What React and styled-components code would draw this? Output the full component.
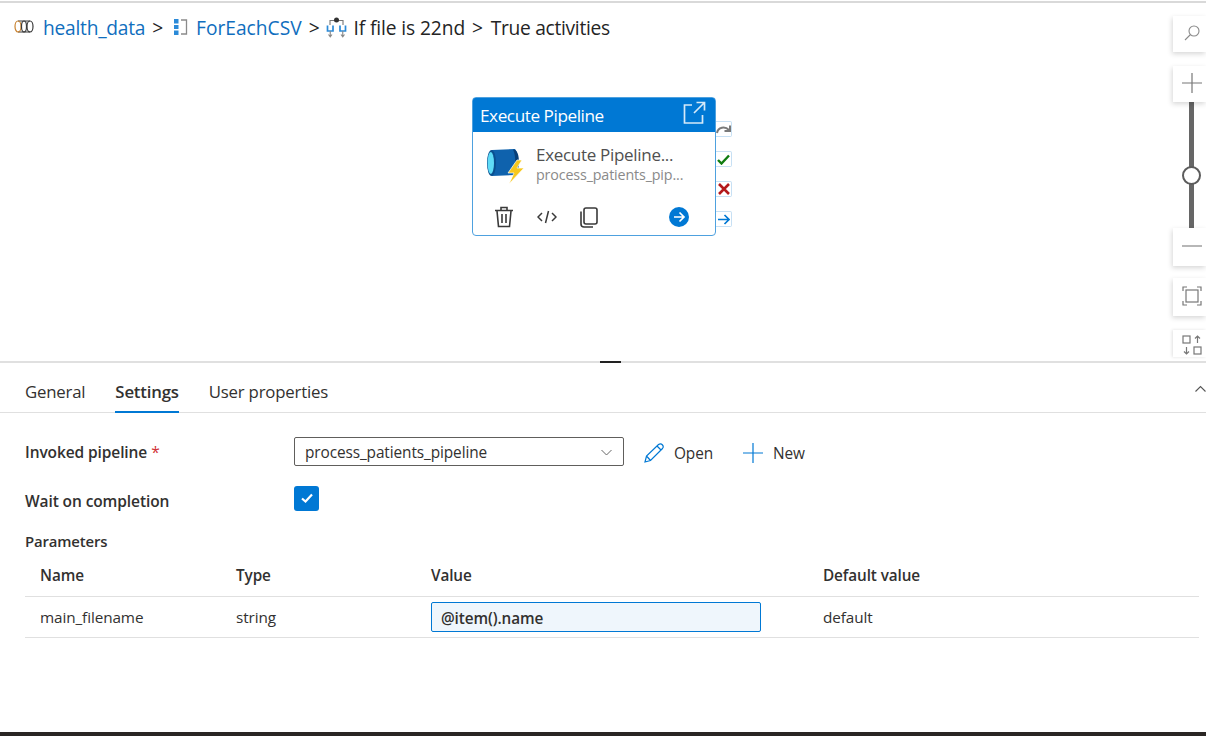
import React from "react";
import styled, { createGlobalStyle } from "styled-components";

const Global = createGlobalStyle`
  html, body { margin: 0; padding: 0; background: #fff; }
  body { font-family: "Open Sans", "Noto Sans", "Liberation Sans", sans-serif; color: #242424; }
  * { box-sizing: border-box; }
`;

const Page = styled.div`
  width: 1206px; height: 736px; overflow: hidden; display: flex; flex-direction: column; background: #fff;
`;
const TopRule = styled.div`
  flex: none; border-top: 2px solid #d9d9d9; margin-top: 1px; height: 3px;
`;
const Canvas = styled.section`
  position: relative; height: 357px; flex: none; padding: 11px 0 0 14px;
`;
const Crumbs = styled.nav`
  display: flex; align-items: center; height: 24px; font-size: 19.2px; color: #242424; white-space: nowrap;
`;
const CrumbLink = styled.span`
  color: #106ebe; margin-left: ${p => p.$ml || 0}px; letter-spacing: ${p => p.$ls ?? -0.25}px;
`;
const CrumbText = styled.span`
  margin-left: ${p => p.$ml || 0}px; letter-spacing: ${p => p.$ls ?? -0.2}px;
`;
const CrumbIcon = styled.svg`
  flex: none; margin-left: ${p => p.$ml || 0}px; display: block;
`;

const Node = styled.div`
  position: absolute; left: 472px; top: 93px; width: 244px; height: 139px;
  border: 1.5px solid #4ea1df; border-radius: 4px; background: #fff; display: flex; flex-direction: column;
`;
const NodeHeader = styled.div`
  height: 34px; flex: none; background: #0078d4; color: #fff; display: flex; align-items: center; justify-content: space-between;
  padding: 0 9px 0 7px; font-size: 17.2px; letter-spacing: -0.45px; border-radius: 2px 2px 0 0;
`;
const NodeBody = styled.div`
  display: flex; align-items: flex-start; padding: 13px 0 0 13px; gap: 11px; height: 70px; flex: none;
`;
const ActivityIcon = styled.svg`
  display: block; flex: none; margin-top: 2px;
`;
const NodeTexts = styled.div`
  display: flex; flex-direction: column; white-space: nowrap;
`;
const NodeTitle = styled.div`
  font-size: 17px; line-height: 20px; color: #505050; letter-spacing: -0.3px;
`;
const NodeSub = styled.div`
  font-size: 14.3px; line-height: 19px; color: #8a8a8a; letter-spacing: -0.15px;
`;
const NodeActions = styled.div`
  display: flex; align-items: center; padding: 2px 26px 0 21px; height: 28px;
`;
const ActionIcon = styled.svg`
  display: block; flex: none; margin-left: ${p => p.$ml || 0}px;
`;
const Spacer = styled.div` flex: 1; `;
const Ports = styled.div`
  position: absolute; left: 716px; top: 117px; display: flex; flex-direction: column; gap: 14px;
`;
const Port = styled.div`
  width: 16px; height: 16px; border: 1px solid #c7e0f4; border-left: none; border-radius: 0 2px 2px 0; background: #fff;
  display: flex; align-items: center; justify-content: center;
`;

const ZoomBar = styled.div`
  position: absolute; left: 1173px; top: 12px; width: 33px; display: flex; flex-direction: column; align-items: stretch;
`;
const ZoomBtn = styled.div`
  height: ${p => p.$h}px; margin-top: ${p => p.$mt || 0}px; background: #fff; box-shadow: -1px 2px 5px rgba(0,0,0,0.16);
  display: flex; align-items: center; justify-content: center; padding: 0 0 2px 4px; overflow: hidden; position: relative; z-index: 1;
`;
const ZoomClip = styled(ZoomBtn)`
  box-shadow: -1px 0 3px rgba(0,0,0,0.12); align-items: flex-start; padding-top: 5px;
`;
const Track = styled.div`
  height: 126px; position: relative; display: flex; justify-content: center; padding-left: 4px;
  &::before { content: ""; width: 5px; height: 100%; background: #666; }
`;
const Thumb = styled.div`
  position: absolute; left: 9px; top: 64px; width: 19px; height: 19px; border-radius: 50%; background: #fff; border: 2px solid #5c5c5c;
`;

const Splitter = styled.div`
  height: 2px; flex: none; background: #e0e0e0; display: flex; justify-content: flex-start; padding-left: 600px;
`;
const Grip = styled.div` width: 21px; height: 2px; background: #222; `;

const Tabs = styled.div`
  height: 50px; flex: none; display: flex; align-items: stretch; gap: 30px; padding: 0 25px; border-bottom: 1px solid #e0e0e0; position: relative; font-size: 16.8px; letter-spacing: -0.2px;
`;
const Tab = styled.div`
  display: flex; align-items: center; padding-top: 8px; font-weight: ${p => p.$active ? 600 : 400};
  border-bottom: 2px solid ${p => p.$active ? "#0078d4" : "transparent"}; margin-bottom: -1px; color: #323130;
`;
const Collapse = styled.svg`
  position: absolute; right: 0; top: 22px;
`;

const Form = styled.div`
  display: flex; flex-direction: column; padding: 24px 7px 0 25px; flex: 1;
`;
const Row = styled.div`
  display: grid; grid-template-columns: 269px 1fr; align-items: center; height: ${p => p.$h}px; margin-bottom: ${p => p.$mb || 0}px;
`;
const Label = styled.div`
  font-size: 15.5px; font-weight: 600; color: #323130; letter-spacing: -0.1px;
  padding-top: ${p => p.$pt || 0}px;
`;
const Req = styled.span` color: #d13438; margin-left: 4px; font-weight: 400; `;
const Controls = styled.div` display: flex; align-items: center; `;
const Select = styled.div`
  width: 330px; height: 29px; border: 1px solid #605e5c; border-radius: 2px; display: flex; align-items: center; justify-content: space-between;
  padding: 1px 11px 0 10px; font-size: 15.4px; color: #323130; letter-spacing: -0.1px;
`;
const CmdBtn = styled.div`
  display: flex; align-items: center; gap: 10px; font-size: 15.4px; margin-left: ${p => p.$ml}px; color: #323130; letter-spacing: -0.1px; padding-top: 3px;
  svg { margin-top: -1px; }
`;
const Check = styled.div`
  width: 25px; height: 25px; border-radius: 3px; background: #0078d4; display: flex; align-items: center; justify-content: center;
`;
const SectionLabel = styled.div`
  font-size: 14.9px; font-weight: 600; color: #323130; height: 20px; line-height: 20px; letter-spacing: -0.15px;
`;
const Table = styled.div` display: flex; flex-direction: column; `;
const TRow = styled.div`
  display: grid; grid-template-columns: 196px 195px 392px 1fr; align-items: center; padding: ${p => p.$head ? "3px" : "0"} 0 0 15px; height: ${p => p.$h}px; border-bottom: 1px solid #e0e0e0;
  font-size: 15.3px; letter-spacing: -0.1px; color: #323130; font-weight: ${p => p.$head ? 600 : 400};
`;
const ValueInput = styled.div`
  width: 330px; height: 30px; background: #eff6fc; border: 1px solid #0078d4; border-radius: 2px; display: flex; align-items: center; padding: 1px 0 0 9px; font-weight: 600; color: #323130;
`;
const BottomBar = styled.div` height: 4px; flex: none; background: #2a2624; `;

const PipelineCrumb = () => (
  <CrumbIcon width="21" height="16" viewBox="0 0 21 16" fill="none" stroke="#3a3a3a" strokeWidth="1.200">
    <path d="M4 2H16M4 13H16" />
    <ellipse cx="4" cy="7.500" rx="3" ry="5.500" stroke="#c9822e" />
    <ellipse cx="10" cy="7.500" rx="2.500" ry="5.500" />
    <ellipse cx="16" cy="7.500" rx="3" ry="5.500" />
  </CrumbIcon>
);
const ForEachCrumb = () => (
  <CrumbIcon $ml={10} width="15" height="18" viewBox="0 0 15 18">
    <path d="M8 2H13.500V16H8" fill="none" stroke="#8a8a8a" strokeWidth="1.300" />
    <rect x="1" y="1" width="4.500" height="4.500" fill="#2b8ad8" />
    <rect x="1" y="7" width="4.500" height="4" fill="#2b8ad8" />
    <rect x="1" y="12.500" width="4.500" height="4.500" fill="#2b8ad8" />
  </CrumbIcon>
);
const IfCrumb = () => (
  <CrumbIcon $ml={7} width="21" height="21" viewBox="0 0 21 21" fill="none">
    <path d="M4 8V3.500H17V8" stroke="#777" strokeWidth="1.100" />
    <circle cx="10.500" cy="3" r="2.500" fill="#333" />
    <path d="M1.500 8.500V14H7V8.500M14 8.500V14H19.500V8.500" stroke="#2b8ad8" strokeWidth="1.700" />
    <path d="M4.250 14V20M16.750 14V20M2.500 17.500L4.250 19.800L6 17.500M15 17.500L16.750 19.800L18.500 17.500" stroke="#888" strokeWidth="1.100" />
  </CrumbIcon>
);
const PipelineActivity = () => (
  <ActivityIcon width="39" height="37" viewBox="0 0 39 37">
    <path d="M6 3 L29 2 C33 7 33 23 29 28 L6 29 Z" fill="#0f62ad" />
    <path d="M27 2.500 C31 2 33 8 33 15 C33 22 31 28 27 27.800 C30 22 30 8 27 2.500 Z" fill="#083f78" />
    <ellipse cx="5.500" cy="16" rx="4.500" ry="13" fill="#0a4f8f" />
    <ellipse cx="4.800" cy="16" rx="3.200" ry="11" fill="#5fdcf7" />
    <path d="M31 13 L22 26 H28 L23 37 L38 21 H31 L36 13 Z" fill="#f6c81e" stroke="#fff" strokeWidth="0.700" />
  </ActivityIcon>
);

export default function App() {
  return (
    <Page>
      <Global />
      <TopRule />
      <Canvas>
        <Crumbs>
          <PipelineCrumb />
          <CrumbLink $ml={8}>health_data</CrumbLink>
          <CrumbText $ml={7}>&gt;</CrumbText>
          <ForEachCrumb />
          <CrumbLink $ml={8} $ls={0}>ForEachCSV</CrumbLink>
          <CrumbText $ml={7}>&gt;</CrumbText>
          <IfCrumb />
          <CrumbText $ml={6} $ls={-0.1}>If file is 22nd</CrumbText>
          <CrumbText $ml={7}>&gt;</CrumbText>
          <CrumbText $ml={8} $ls={-0.3}>True activities</CrumbText>
        </Crumbs>

        <Node>
          <NodeHeader>
            Execute Pipeline
            <svg width="24" height="24" viewBox="0 0 24 24" fill="none" stroke="#d5e9f8" strokeWidth="1.700" style={{ marginTop: -4 }}>
              <path d="M10 4H2.500V22H20.500V14M12 12L22.500 1.500M14.500 1.500H22.500V9.500" />
            </svg>
          </NodeHeader>
          <NodeBody>
            <PipelineActivity />
            <NodeTexts>
              <NodeTitle>Execute Pipeline...</NodeTitle>
              <NodeSub>process_patients_pip...</NodeSub>
            </NodeTexts>
          </NodeBody>
          <NodeActions>
            <ActionIcon width="20" height="22" viewBox="0 0 20 22" fill="none" stroke="#3a3a3a" strokeWidth="1.600">
              <path d="M1 4.500H19M7 4V1.500H13V4M3 5L4.500 20.500H15.500L17 5M8 8V17M12 8V17" />
            </ActionIcon>
            <ActionIcon $ml={23} width="20" height="14" viewBox="0 0 20 14" fill="none" stroke="#3a3a3a" strokeWidth="1.500">
              <path d="M5 3L1 7L5 11M15 3L19 7L15 11M11.500 1L8.500 13" />
            </ActionIcon>
            <ActionIcon $ml={22} width="20" height="21" viewBox="0 0 20 21" fill="none" stroke="#3a3a3a" strokeWidth="1.600">
              <rect x="5" y="1" width="13" height="16" rx="2" />
              <path d="M2 4.500V17C2 19 3 20 5 20H14" />
            </ActionIcon>
            <Spacer />
            <ActionIcon width="20" height="20" viewBox="0 0 20 20" fill="none">
              <circle cx="10" cy="10" r="10" fill="#0078d4" />
              <path d="M5 10H15M10.500 5.500L15 10L10.500 14.500" stroke="#fff" strokeWidth="1.700" />
            </ActionIcon>
          </NodeActions>
        </Node>

        <Ports>
          <Port>
            <svg width="15" height="11" viewBox="0 0 15 11" fill="none" stroke="#7a7a7a" strokeWidth="2">
              <path d="M1 9C2 3 9 2 13 6M14 1.500V7H8.500" />
            </svg>
          </Port>
          <Port>
            <svg width="13" height="11" viewBox="0 0 13 11" fill="none" stroke="#107c10" strokeWidth="2.400">
              <path d="M1 6L4.500 9.500L12 1.500" />
            </svg>
          </Port>
          <Port>
            <svg width="12" height="12" viewBox="0 0 12 12" fill="none" stroke="#b3191c" strokeWidth="2.600">
              <path d="M1 1L11 11M11 1L1 11" />
            </svg>
          </Port>
          <Port>
            <svg width="12" height="11" viewBox="0 0 12 11" fill="none" stroke="#0078d4" strokeWidth="1.700">
              <path d="M0 5.500H11M6.500 1L11 5.500L6.500 10" />
            </svg>
          </Port>
        </Ports>

        <ZoomBar>
          <ZoomBtn $h={36}>
            <svg width="16" height="16" viewBox="0 0 16 16" fill="none" stroke="#8a8a8a" strokeWidth="1.100">
              <circle cx="10" cy="6" r="5" />
              <path d="M6.500 9.500L1 15" />
            </svg>
          </ZoomBtn>
          <ZoomBtn $h={36} $mt={14}>
            <svg width="20" height="20" viewBox="0 0 20 20" fill="none" stroke="#777" strokeWidth="1.200">
              <path d="M0 10H20M10 0V20" />
            </svg>
          </ZoomBtn>
          <Track><Thumb /></Track>
          <ZoomBtn $h={38}>
            <svg width="20" height="2" viewBox="0 0 20 2" fill="none" stroke="#888" strokeWidth="1.200">
              <path d="M0 1H20" />
            </svg>
          </ZoomBtn>
          <ZoomBtn $h={38} $mt={12}>
            <svg width="20" height="20" viewBox="0 0 20 20" fill="none" stroke="#777" strokeWidth="1.200">
              <path d="M1 5V1H5M15 1H19V5M19 15V19H15M5 19H1V15" />
              <rect x="4" y="4" width="12" height="12" />
            </svg>
          </ZoomBtn>
          <ZoomClip $h={27} $mt={14}>
            <svg width="20" height="20" viewBox="0 0 20 20" fill="none" stroke="#777" strokeWidth="1.200">
              <rect x="1" y="1" width="7" height="7" />
              <rect x="12" y="12" width="7" height="7" />
              <path d="M15.500 8V1M13 3.500L15.500 1L18 3.500M4.500 12V19M2 16.500L4.500 19L7 16.500" />
            </svg>
          </ZoomClip>
        </ZoomBar>
      </Canvas>
      <Splitter><Grip /></Splitter>
      <Tabs>
        <Tab>General</Tab>
        <Tab $active>Settings</Tab>
        <Tab>User properties</Tab>
        <Collapse width="11" height="8" viewBox="0 0 11 8" fill="none" stroke="#555" strokeWidth="1.100">
          <path d="M0.500 6.500L5.500 1.500L10.500 6.500" />
        </Collapse>
      </Tabs>
      <Form>
        <Row $h={29} $mb={18}>
          <Label>Invoked pipeline<Req>*</Req></Label>
          <Controls>
            <Select>
              process_patients_pipeline
              <svg width="11" height="7" viewBox="0 0 11 7" fill="none" stroke="#666" strokeWidth="1">
                <path d="M0.500 1L5.500 6L10.500 1" />
              </svg>
            </Select>
            <CmdBtn $ml={20}>
              <svg width="20" height="20" viewBox="0 0 20 20" fill="none" stroke="#0078d4" strokeWidth="1.200">
                <path d="M1 19L2.500 13L14.500 1.500C16 0.500 17.500 0.800 18.500 2C19.500 3.200 19.300 4.500 18.500 5.500L6.500 17.500ZM2.500 13L6.500 17.500M13 3L17 7" />
              </svg>
              Open
            </CmdBtn>
            <CmdBtn $ml={30}>
              <svg width="20" height="20" viewBox="0 0 20 20" fill="none" stroke="#0078d4" strokeWidth="1.200">
                <path d="M0 10H20M10 0V20" />
              </svg>
              New
            </CmdBtn>
          </Controls>
        </Row>
        <Row $h={25} $mb={22}>
          <Label $pt={6}>Wait on completion</Label>
          <Check>
            <svg width="12" height="10" viewBox="0 0 12 10" fill="none" stroke="#fff" strokeWidth="2.200">
              <path d="M1 5.500L4.500 8.500L11 1.500" />
            </svg>
          </Check>
        </Row>
        <SectionLabel>Parameters</SectionLabel>
        <Table>
          <TRow $head $h={46}>
            <span>Name</span><span>Type</span><span>Value</span><span>Default value</span>
          </TRow>
          <TRow $h={41}>
            <span>main_filename</span>
            <span>string</span>
            <ValueInput>@item().name</ValueInput>
            <span>default</span>
          </TRow>
        </Table>
      </Form>
      <BottomBar />
    </Page>
  );
}
